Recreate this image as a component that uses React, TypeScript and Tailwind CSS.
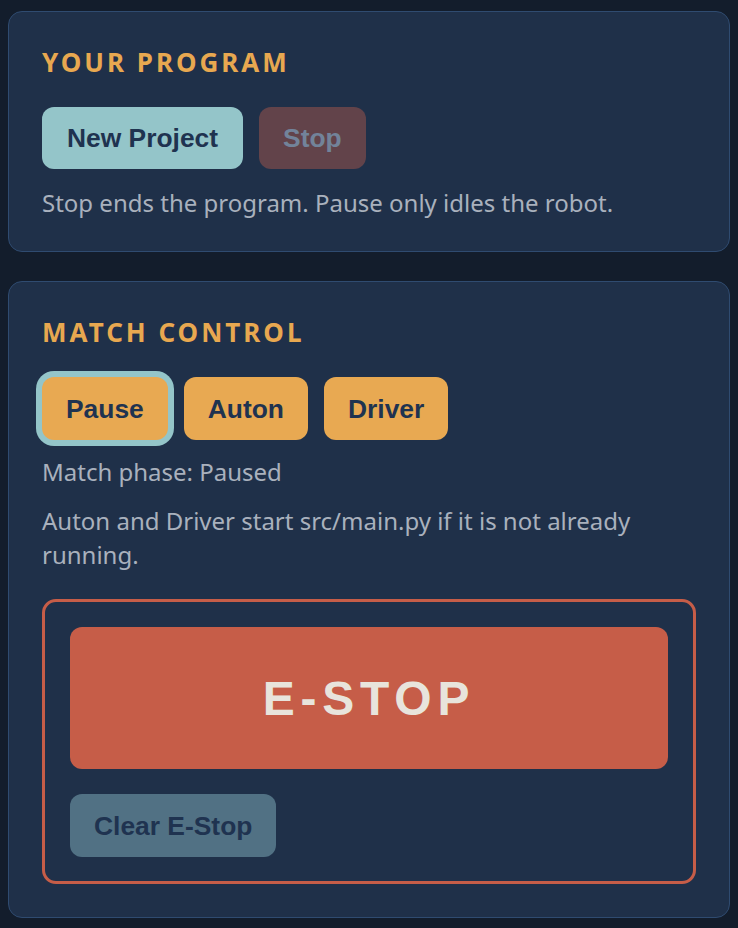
import React from "react";

const sans = { fontFamily: '"Noto Sans", "Open Sans", sans-serif' };
const arial = { fontFamily: '"Liberation Sans", Arial, sans-serif' };

export default function App() {
  return (
    <div className="min-h-[928px] w-[738px] bg-[#131d2c] px-2 pt-[11px] pb-2" style={sans}>
      <section className="rounded-[14px] border border-[#2f4b70] bg-[#1f3049] px-[33px] pt-8 pb-[31px]">
        <h2 className="text-[26px] font-bold leading-[36px] tracking-[0.115em] text-[#e8a850]">YOUR PROGRAM</h2>
        <div className="mt-[27px] flex gap-4" style={arial}>
          <button className="h-[62px] rounded-[12px] bg-[#94c5c9] px-[25px] text-[26.4px] font-bold leading-[30px] text-[#1f3350]">
            New Project
          </button>
          <button className="h-[62px] rounded-[12px] bg-[#62434a] px-6 text-[26.4px] font-bold leading-[30px] text-[#72839a]">
            Stop
          </button>
        </div>
        <p className="mt-[17px] text-[24px] leading-[34px] text-[#a9b1bd]">
          Stop ends the program. Pause only idles the robot.
        </p>
      </section>

      <section className="mt-[29px] rounded-[14px] border border-[#2f4b70] bg-[#1f3049] px-[33px] pt-8 pb-[33px]">
        <h2 className="text-[26px] font-bold leading-[36px] tracking-[0.115em] text-[#e8a850]">MATCH CONTROL</h2>
        <div className="mt-[27px] flex gap-4" style={arial}>
          <button className="h-[63px] rounded-[12px] bg-[#e8a952] px-6 text-[26.4px] font-bold leading-[30px] text-[#1f3350] shadow-[0_0_0_6px_#94c5c9]">
            Pause
          </button>
          <button className="h-[63px] rounded-[12px] bg-[#e8a952] px-6 text-[26.4px] font-bold leading-[30px] text-[#1f3350]">
            Auton
          </button>
          <button className="h-[63px] rounded-[12px] bg-[#e8a952] px-6 text-[26.4px] font-bold leading-[30px] text-[#1f3350]">
            Driver
          </button>
        </div>
        <p className="mt-[15px] text-[24px] leading-[34px] text-[#a9b1bd]">Match phase: Paused</p>
        <p className="mt-[15px] text-[24px] leading-[34px] text-[#a9b1bd]">
          Auton and Driver start src/main.py if it is not already running.
        </p>
        <div className="mt-[27px] flex flex-col items-start gap-[25px] rounded-[14px] border-[3px] border-[#c65d48] p-[25px] pb-6">
          <button
            className="flex h-[142px] w-full items-center justify-center rounded-[12px] bg-[#c65d48] text-[48px] font-bold leading-[55px] tracking-[0.12em] text-[#e8e4dc]"
            style={arial}
          >
            E-STOP
          </button>
          <button
            className="h-[63px] rounded-[12px] bg-[#517184] px-6 text-[26.4px] font-bold leading-[30px] text-[#1f3350]"
            style={arial}
          >
            Clear E-Stop
          </button>
        </div>
      </section>
    </div>
  );
}
